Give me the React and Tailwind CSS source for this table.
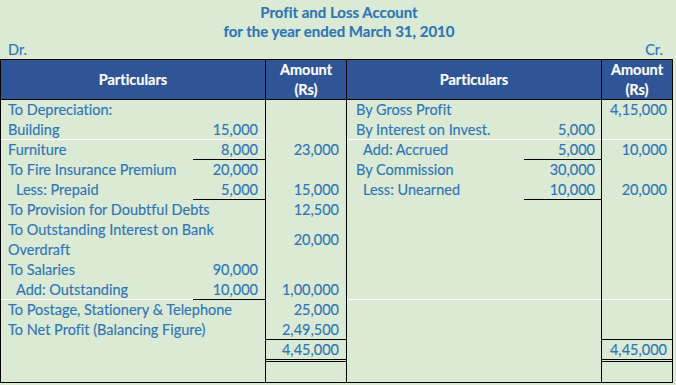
import React from "react";

const F = { fontFamily: "Lato, 'Open Sans', sans-serif" };

const leftRows = [
  { t: "To Depreciation:" },
  { t: "Building", a: "15,000", w: true },
  { t: "Furniture", a: "8,000", u: true },
  { t: "To Fire Insurance Premium", a: "20,000" },
  { t: "Less: Prepaid", a: "5,000", u: true, i: true },
  { t: "To Provision for Doubtful Debts" },
  { t: "To Outstanding Interest on Bank", tall: true, t2: "Overdraft" },
  { t: "To Salaries", a: "90,000" },
  { t: "Add: Outstanding", a: "10,000", u: true, i: true, w: true },
  { t: "To Postage, Stationery & Telephone" },
  { t: "To Net Profit (Balancing Figure)" },
];

const rightRows = [
  { t: "By Gross Profit" },
  { t: "By Interest on Invest.", a: "5,000", w: true },
  { t: "Add: Accrued", a: "5,000", u: true, i: true },
  { t: "By Commission", a: "30,000" },
  { t: "Less: Unearned", a: "10,000", u: true, i: true },
];

function Row({ r, textW, innerW, pl, pr, ind }) {
  if (r.tall) {
    return (
      <div className="flex flex-col h-[40px]">
        <div className="h-[20px] leading-[20px] whitespace-nowrap" style={{ paddingLeft: pl }}>{r.t}</div>
        <div className="h-[20px] leading-[20px] whitespace-nowrap" style={{ paddingLeft: pl }}>{r.t2}</div>
      </div>
    );
  }
  return (
    <div className="flex h-[20px]">
      <div
        className={`box-border h-[20px] leading-[20px] whitespace-nowrap ${r.w ? "border-b border-white" : ""}`}
        style={{ width: textW, paddingLeft: r.i ? ind : pl }}
      >
        {r.t}
      </div>
      <div
        className={`box-border h-[20px] leading-[20px] text-right ${r.u ? "border-b border-black" : r.w ? "border-b border-white" : ""}`}
        style={{ width: innerW, paddingRight: pr }}
      >
        {r.a || ""}
      </div>
    </div>
  );
}

function AmountCol({ items, pr, width, last }) {
  return (
    <div className={`flex flex-col ${last ? "" : "border-r border-black"}`} style={{ width }}>
      {items.map((it, k) => (
        <div
          key={k}
          className={`box-border flex items-center justify-end ${it.b ? "border-b border-black" : ""} ${it.d ? "border-b-[3px] border-double border-black" : ""} ${it.w ? "border-b border-white" : ""}`}
          style={{ height: it.h || 20, paddingRight: pr }}
        >
          {it.v || ""}
        </div>
      ))}
    </div>
  );
}

export default function App() {
  return (
    <div
      className="w-[676px] h-[385px] bg-[#dbead4] text-[#2e75b6] text-[14.5px] overflow-hidden [font-variant-ligatures:none] [-webkit-text-stroke:0.15px]"
      style={F}
    >
      <div className="pt-[3px]">
        <div className="h-[19px] leading-[19px] text-center font-bold text-[15px] pl-[2px]">Profit and Loss Account</div>
        <div className="h-[19px] leading-[19px] text-center font-bold text-[15px] pl-[2px]">for the year ended March 31, 2010</div>
        <div className="h-[18px] leading-[18px] flex justify-between pl-[8px] pr-[13px]">
          <span>Dr.</span>
          <span>Cr.</span>
        </div>
      </div>
      <div className="w-[673px] border border-black">
        <div className="flex h-[40px] bg-[#2f5597] text-white font-bold border-b border-black">
          <div className="w-[265px] border-r border-black flex items-center justify-center">Particulars</div>
          <div className="w-[81px] border-r border-black flex flex-col items-center justify-center leading-[20px]">
            <span>Amount</span>
            <span>(Rs)</span>
          </div>
          <div className="w-[255px] border-r border-black flex items-center justify-center">Particulars</div>
          <div className="w-[70px] flex flex-col items-center justify-center leading-[20px]">
            <span>Amount</span>
            <span>(Rs)</span>
          </div>
        </div>
        <div className="flex h-[282px]">
          <div className="w-[265px] border-r border-black flex flex-col">
            {leftRows.map((r, k) => (
              <Row key={k} r={r} textW={192} innerW={72} pl={7} pr={7} ind={15} />
            ))}
          </div>
          <AmountCol
            width={81}
            pr={7}
            items={[
              {}, {}, { v: "23,000" }, {}, { v: "15,000" }, { v: "12,500" },
              { v: "20,000", h: 40 }, {}, { v: "1,00,000" }, { v: "25,000" },
              { v: "2,49,500", b: true }, { v: "4,45,000", d: true, h: 22 }, {},
            ]}
          />
          <div className="w-[255px] border-r border-black flex flex-col">
            {rightRows.map((r, k) => (
              <Row key={k} r={r} textW={177} innerW={77} pl={9} pr={6} ind={16} />
            ))}
            <div className="h-[80px]" />
            <div className="box-border h-[20px] border-b border-white" />
          </div>
          <AmountCol
            width={70}
            pr={5}
            last
            items={[
              { v: "4,15,000" }, { w: true }, { v: "10,000" }, {}, { v: "20,000" }, {}, {}, {}, {},
              { w: true }, {}, { b: true }, { v: "4,45,000", d: true, h: 22 }, {},
            ]}
          />
        </div>
      </div>
    </div>
  );
}
